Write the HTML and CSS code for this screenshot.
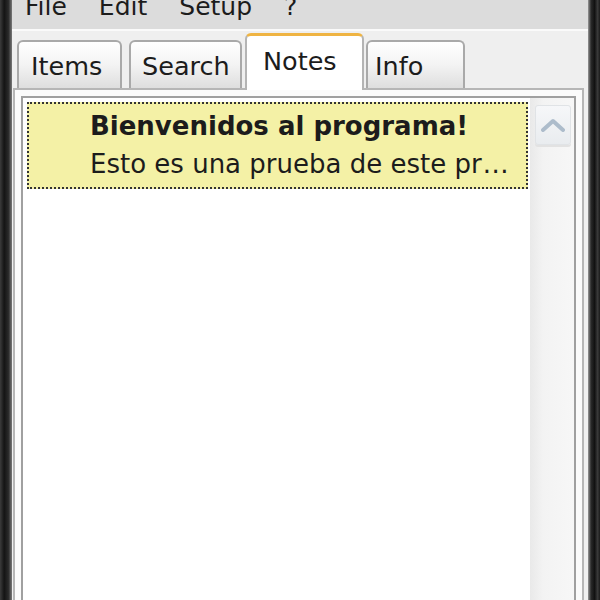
FILE: index.html
```html
<!DOCTYPE html>
<html lang="es">
<head>
  <meta charset="UTF-8">
  <title>Notes</title>
  <link rel="stylesheet" href="styles.css">
</head>
<body>
  <div class="frame frame-left"></div>
  <div class="window">
    <div class="menubar">
      <span>File</span>
      <span>Edit</span>
      <span>Setup</span>
      <span>?</span>
    </div>
    <div class="tabstrip">
      <div class="tab tab-items">Items</div>
      <div class="tab tab-search">Search</div>
      <div class="tab tab-notes active">Notes</div>
      <div class="tab tab-info">Info</div>
    </div>
    <div class="panel">
      <div class="listbox">
        <div class="list">
          <div class="note">
            <div class="note-title">Bienvenidos al programa!</div>
            <div class="note-text">Esto es una prueba de este pr<span class="dots">...</span></div>
          </div>
        </div>
        <div class="scrollbar">
          <div class="scroll-up">
            <svg width="24" height="14" viewBox="0 0 24 14"><path d="M2 12 L12 3 L22 12" fill="none" stroke="#adbccb" stroke-width="4" stroke-linejoin="round" stroke-linecap="round"/></svg>
          </div>
        </div>
      </div>
    </div>
  </div>
  <div class="frame frame-right"></div>
</body>
</html>
```

FILE: styles.css
```css
* { box-sizing: border-box; margin: 0; padding: 0; }
html, body { height: 100%; overflow: hidden; }
body {
  display: flex;
  background: #f0f0f0;
  font-family: "DejaVu Sans", Verdana, sans-serif;
  color: #1c1c1c;
}
.frame { width: 12px; flex: none; }
.frame-left { background: linear-gradient(to right, #3c3c3c 0, #141414 35%, #2a2a2a 70%, #7a7a7a 100%); }
.frame-right { background: linear-gradient(to right, #9a9a9a 0, #2a2a2a 25%, #111 55%, #3a3a3a 80%, #1a1a1a 100%); }

.window { flex: 1; display: flex; flex-direction: column; min-width: 0; }

.menubar {
  height: 31px;
  flex: none;
  display: flex;
  gap: 32px;
  padding-left: 13px;
  background: #dcdcdc;
  border-bottom: 2px solid #fafafa;
  overflow: hidden;
  font-size: 25px;
  line-height: 29px;
}
.menubar span { margin-top: -8px; }

.tabstrip {
  height: 57px;
  flex: none;
  display: flex;
  align-items: flex-end;
  padding-left: 5px;
  background: #efefef;
}
.tab {
  height: 48px;
  border: 2px solid #a9a9a9;
  border-bottom: none;
  border-radius: 6px 6px 0 0;
  background: linear-gradient(to bottom, #ffffff 0, #f3f3f3 50%, #dedede 100%);
  font-size: 25.5px;
  line-height: 30px;
  padding-top: 9px;
  white-space: nowrap;
}
.tab-items { width: 105px; padding-left: 12px; margin-right: 7px; }
.tab-search { width: 113px; padding-left: 11px; margin-right: 3px; }
.tab-notes { width: 119px; padding-left: 16px; margin-right: 2px; }
.tab-info { width: 99px; padding-left: 7px; }
.tab.active {
  height: 57px;
  margin-bottom: -2px;
  position: relative;
  z-index: 1;
  background: #fff;
  border-color: #b4b4b4;
  border-top: 3px solid #efb443;
  padding-top: 10px;
}

.panel {
  flex: 1;
  display: flex;
  margin: 0 4px 0 1px;
  border: 2px solid #b6b6b6;
  border-bottom: none;
  background: #fbfbfb;
  padding: 6px 6px 0 6px;
}
.listbox {
  flex: 1;
  display: flex;
  border: 2px solid #a0a0a0;
  border-bottom: none;
  background: #fff;
}
.list { flex: 1; padding: 4px 2px 0 4px; min-width: 0; }
.note {
  height: 87px;
  background: #f4f1a6;
  border: 2px dotted #333;
  padding: 3px 0 0 61px;
  font-size: 26px;
  line-height: 38px;
  white-space: nowrap;
  overflow: hidden;
}
.note-title { font-weight: bold; }
.dots { letter-spacing: 0.5px; padding-left: 1px; }

.scrollbar {
  width: 44px;
  flex: none;
  padding: 7px 3px 0 5px;
  background: linear-gradient(to right, #e9e9e9 0, #f3f3f3 30%, #f7f7f7 100%);
}
.scroll-up {
  height: 40px;
  display: flex;
  align-items: center;
  justify-content: center;
  background: linear-gradient(to bottom, #f6f7f9, #e9ecef);
  border: 1px solid #e0e3e6;
  border-radius: 3px;
  box-shadow: 0 2px 0 #e2e2e2;
}
```
